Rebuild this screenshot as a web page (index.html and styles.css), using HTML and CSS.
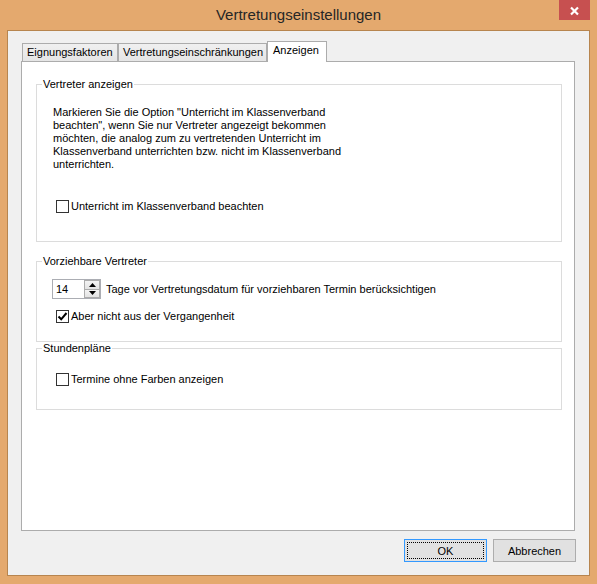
FILE: index.html
```html
<!DOCTYPE html>
<html lang="de">
<head>
<meta charset="utf-8">
<title>Vertretungseinstellungen</title>
<link rel="stylesheet" href="styles.css">
</head>
<body>
<div class="window">
  <div class="titlebar">
    <div class="title">Vertretungseinstellungen</div>
    <div class="close">
      <svg width="31" height="20" viewBox="0 0 31 20"><path d="M12 7.5 L19 14.5 M19 7.5 L12 14.5" stroke="#fff" stroke-width="2.2" fill="none"/></svg>
    </div>
  </div>
  <div class="client">
    <div class="tabs-area">
      <div class="tabstrip">
        <div class="tab tab-eignung">Eignungsfaktoren</div>
        <div class="tab tab-einschr">Vertretungseinschränkungen</div>
        <div class="tab tab-active tab-anzeigen">Anzeigen</div>
      </div>
      <div class="panel">
        <fieldset class="group group-vertreter">
          <legend>Vertreter anzeigen</legend>
          <p class="hint">Markieren Sie die Option "Unterricht im Klassenverband<br>beachten", wenn Sie nur Vertreter angezeigt bekommen<br>möchten, die analog zum zu vertretenden Unterricht im<br>Klassenverband unterrichten bzw. nicht im Klassenverband<br>unterrichten.</p>
          <div class="check-row check-klasse">
            <span class="checkbox"></span>
            <span>Unterricht im Klassenverband beachten</span>
          </div>
        </fieldset>
        <fieldset class="group group-vorzieh">
          <legend>Vorziehbare Vertreter</legend>
          <div class="spin-row">
            <div class="spinner">
              <span class="spin-value">14</span>
              <span class="spin-buttons">
                <span class="spin-btn"><svg width="7" height="4" viewBox="0 0 7 4"><path d="M0 4 L3.5 0 L7 4 Z" fill="#000"/></svg></span>
                <span class="spin-btn"><svg width="7" height="4" viewBox="0 0 7 4"><path d="M0 0 L3.5 4 L7 0 Z" fill="#000"/></svg></span>
              </span>
            </div>
            <span>Tage vor Vertretungsdatum für vorziehbaren Termin berücksichtigen</span>
          </div>
          <div class="check-row check-vergangen">
            <span class="checkbox"><svg width="11" height="11" viewBox="0 0 11 11"><path d="M1.5 5.5 L4.2 8.3 L9.5 2" stroke="#000" stroke-width="2" fill="none"/></svg></span>
            <span>Aber nicht aus der Vergangenheit</span>
          </div>
        </fieldset>
        <fieldset class="group group-plaene">
          <legend>Stundenpläne</legend>
          <div class="check-row check-farben">
            <span class="checkbox"></span>
            <span>Termine ohne Farben anzeigen</span>
          </div>
        </fieldset>
      </div>
    </div>
    <div class="buttons">
      <button class="btn btn-default">OK</button>
      <button class="btn">Abbrechen</button>
    </div>
  </div>
</div>
</body>
</html>
```
FILE: styles.css
```css
* { box-sizing: border-box; }

body {
  margin: 0;
  font-family: "Liberation Sans", Arial, sans-serif;
  font-size: 11px;
  color: #000;
}

.window {
  width: 597px;
  height: 584px;
  background: #E4A96E;
  overflow: hidden;
}

.titlebar {
  height: 30px;
  display: grid;
  grid-template-columns: 1fr auto 1fr;
}

.title {
  grid-column: 2;
  font-size: 15px;
  line-height: 30px;
  color: #262626;
  white-space: nowrap;
}

.close {
  grid-column: 3;
  justify-self: end;
  align-self: start;
  margin-right: 7px;
  width: 31px;
  height: 20px;
  background: #C75050;
  display: flex;
}

.client {
  margin: 0 7px;
  height: 546px;
  border: 1px solid #B7854F;
  background: #F0F0F0;
}

.tabs-area {
  padding: 10px 0 0 13px;
}

.tabstrip {
  display: flex;
  align-items: flex-end;
  padding-left: 1px;
  position: relative;
  z-index: 1;
}

.tab {
  height: 18px;
  border: 1px solid #ACACAC;
  border-bottom: none;
  background: linear-gradient(#F0F0F0, #E5E5E5);
  line-height: 17px;
  padding-left: 4px;
  white-space: nowrap;
  overflow: hidden;
}

.tab-eignung { width: 96px; }
.tab-einschr { width: 149px; }

.tab-active {
  height: 21px;
  margin-bottom: -1px;
  background: #fff;
  padding-left: 5px;
  padding-bottom: 3px;
}

.tab-anzeigen { width: 60px; }

.panel {
  width: 554px;
  height: 470px;
  border: 1px solid #ACACAC;
  background: #fff;
  padding: 15px 12px 0 14px;
}

.group {
  margin: 0;
  padding: 0;
  border: 1px solid #DCDCDC;
  min-width: 0;
}

.group legend {
  padding: 0 1px;
  margin-left: 5px;
  line-height: 15px;
}

.group-vertreter { padding-bottom: 28px; }
.group-vorzieh { margin-top: 12px; padding-bottom: 18px; }
.group-plaene { margin-top: -1px; padding-bottom: 23px; }

.hint {
  margin: 0;
  padding: 14px 0 0 16px;
  line-height: 13px;
}

.check-row {
  display: flex;
  align-items: center;
  gap: 2px;
  margin-left: 19px;
  line-height: 13px;
}

.check-klasse { margin-top: 29px; }
.check-vergangen { margin-top: 11px; }
.check-farben { margin-top: 17px; }

.checkbox {
  width: 13px;
  height: 13px;
  border: 1px solid #333;
  background: #fff;
  display: flex;
  flex: none;
}

.spin-row {
  display: flex;
  align-items: center;
  gap: 5px;
  margin: 10px 0 0 15px;
}

.spinner {
  width: 49px;
  height: 20px;
  border: 1px solid #ABADB3;
  background: #fff;
  display: flex;
  flex: none;
}

.spin-value {
  flex: 1;
  padding-left: 3px;
  line-height: 18px;
}

.spin-buttons {
  width: 16px;
  display: flex;
  flex-direction: column;
}

.spin-btn {
  flex: 1;
  border: 1px solid #ACACAC;
  background: linear-gradient(#F3F3F3, #E3E3E3);
  display: flex;
  align-items: center;
  justify-content: center;
}

.spin-btn + .spin-btn { border-top: none; }

.buttons {
  display: flex;
  justify-content: flex-end;
  gap: 6px;
  padding: 8px 13px 0 0;
}

.btn {
  width: 83px;
  height: 23px;
  border: 1px solid #ADADAD;
  background: #E1E1E1;
  font-family: inherit;
  font-size: 11px;
  color: #000;
  padding: 0;
}

.btn-default {
  border-color: #3399FF;
  outline: 1px dotted #000;
  outline-offset: -4px;
}
```
